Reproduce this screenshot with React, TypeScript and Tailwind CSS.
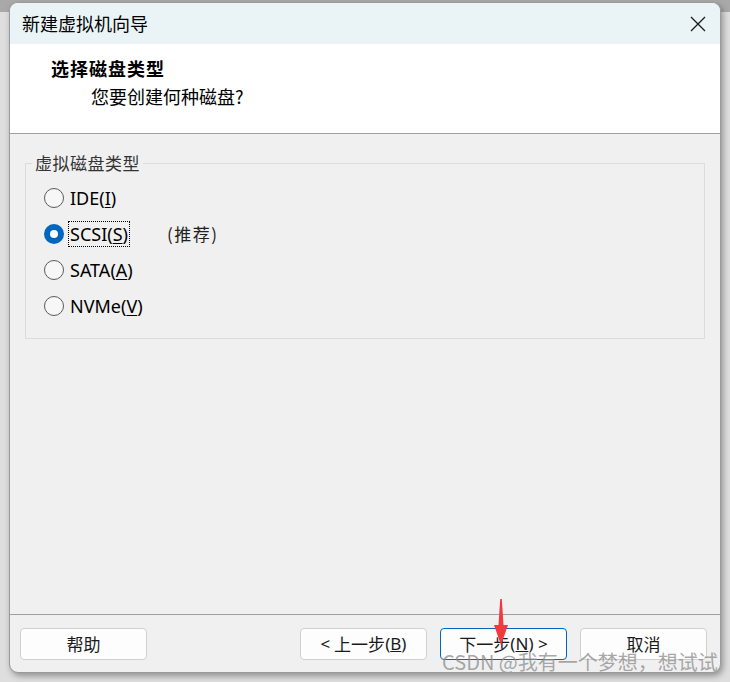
import React from "react";

const cjk = { fontFamily: '"Noto Sans CJK SC", sans-serif' };
const ui = { fontFamily: '"Noto Sans", "Noto Sans CJK SC", sans-serif' };

function Radio({ checked }: { checked?: boolean }) {
  if (checked) {
    return (
      <span className="flex h-[20px] w-[20px] shrink-0 items-center justify-center rounded-full bg-[#0067c0]">
        <span className="h-[8px] w-[8px] rounded-full bg-white" />
      </span>
    );
  }
  return <span className="h-[20px] w-[20px] shrink-0 rounded-full border border-[#5a5a5a] bg-[#f7f7f7]" />;
}

function Option({ label, hot, checked, extra }: { label: string; hot: string; checked?: boolean; extra?: string }) {
  return (
    <div className="flex h-[36px] items-center">
      <Radio checked={checked} />
      <span
        className={`ml-[5px] px-px text-[18px] leading-[24px] text-black ${checked ? "outline outline-1 outline-dotted outline-black" : ""}`}
        style={ui}
      >
        {label}(<span className="underline underline-offset-2">{hot}</span>)
      </span>
      {extra && (
        <span className="ml-[38px] text-[17px] tracking-[1.5px] text-[#222]" style={cjk}>
          {extra}
        </span>
      )}
    </div>
  );
}

function Btn({ children, primary }: { children: React.ReactNode; primary?: boolean }) {
  return (
    <button
      className={`flex h-[32px] w-[127px] items-center justify-center rounded-[4px] border bg-[#fdfdfd] text-[17px] text-[#1a1a1a] ${
        primary ? "border-[#0067c0]" : "border-[#d0d0d0]"
      }`}
      style={cjk}
    >
      {children}
    </button>
  );
}

export default function App() {
  return (
    <div className="h-[682px] w-[730px] overflow-hidden bg-[linear-gradient(to_bottom,#a9a9a9_0,#a9a9a9_12px,#dedede_12px)] pl-[9px] pt-[2px]">
      <div className="relative flex h-[671px] w-[712px] flex-col overflow-hidden rounded-[9px] border border-[#9a9a9a] bg-[#f0f0f0] shadow-[2px_3px_6px_rgba(0,0,0,0.35)]">
        {/* title bar */}
        <div className="flex h-[41px] items-center justify-between bg-[#eaf4f7] pl-[12px] pr-[14px]">
          <span className="text-[18px] text-black" style={cjk}>
            新建虚拟机向导
          </span>
          <svg width="16" height="16" viewBox="0 0 16 16">
            <path d="M1 1 L15 15 M15 1 L1 15" stroke="#1a1a1a" strokeWidth="1.3" />
          </svg>
        </div>
        {/* header */}
        <div className="h-[90px] border-b border-[#a0a0a0] bg-white">
          <div className="ml-[41px] mt-[12px] text-[18px] font-bold leading-[24px] tracking-[1px] text-black" style={cjk}>
            选择磁盘类型
          </div>
          <div className="ml-[81px] mt-[4px] text-[18px] leading-[24px] text-black" style={cjk}>
            您要创建何种磁盘?
          </div>
        </div>
        {/* body */}
        <div className="flex-1 px-[15px] pt-[29px]">
          <div className="relative h-[176px] border border-[#dcdcdc]">
            <span className="absolute left-[6px] top-[-12px] bg-[#f0f0f0] px-[3px] text-[17px] leading-[22px] tracking-[0.5px] text-[#333]" style={cjk}>
              虚拟磁盘类型
            </span>
            <div className="pl-[18px] pt-[16px]">
              <Option label="IDE" hot="I" />
              <Option label="SCSI" hot="S" checked extra="(推荐)" />
              <Option label="SATA" hot="A" />
              <Option label="NVMe" hot="V" />
            </div>
          </div>
        </div>
        {/* footer */}
        <div className="flex h-[58px] items-start border-t border-[#a0a0a0] pl-[10px] pr-[13px] pt-[13px]">
          <Btn>帮助</Btn>
          <div className="ml-auto flex gap-[13px]">
            <Btn>
              <span style={ui}>&lt;</span>&nbsp;上一步<span style={ui}>(<span className="underline">B</span>)</span>
            </Btn>
            <Btn primary>
              下一步<span style={ui}>(<span className="underline">N</span>) &gt;</span>
            </Btn>
            <Btn>取消</Btn>
          </div>
        </div>
        {/* red arrow annotation */}
        <svg className="absolute left-[481px] top-[594px]" width="20" height="50" viewBox="0 0 20 50">
          <path d="M9.2 2 L10.8 2 L12.5 28 L17 28 L10 48 L3 28 L7.5 28 Z" fill="#f23a3a" />
        </svg>
        {/* watermark */}
        <span className="absolute left-[432px] top-[647px] whitespace-nowrap text-[20px] leading-[24px] text-[rgba(140,140,140,0.75)]" style={cjk}>
          CSDN @我有一个梦想，想试试
        </span>
      </div>
    </div>
  );
}
